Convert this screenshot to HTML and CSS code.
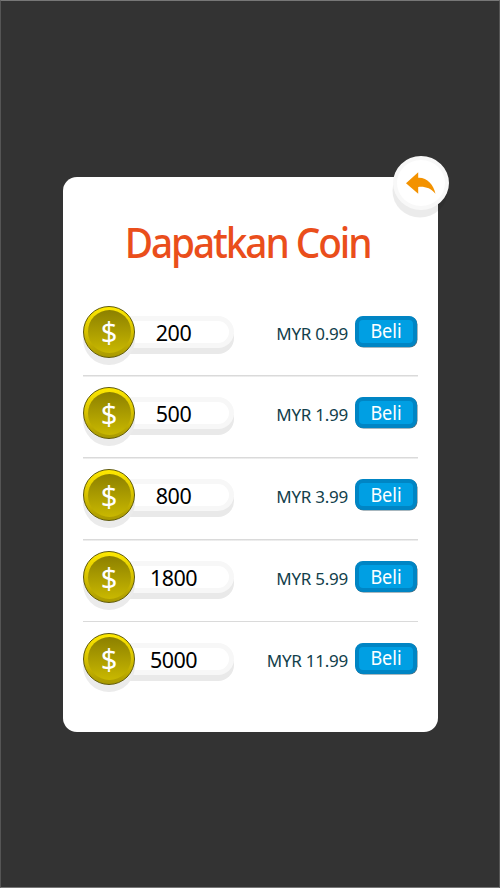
FILE: index.html
```html
<!DOCTYPE html>
<html lang="ms">
<head>
<meta charset="utf-8">
<title>Dapatkan Coin</title>
<link rel="stylesheet" href="styles.css">
</head>
<body>
<main class="card">
  <button class="back" aria-label="Kembali"><svg width="30" height="24" viewBox="0 0 30 24"><path d="M0 12.2 12.2 1.2v5.5C21 6.2 27.5 13.5 29.5 22.8 24.5 17.1 19.5 15.3 12.2 15.9v6.9z"/></svg></button>
  <h1 class="title">Dapatkan Coin</h1>
  <ul class="offers">
    <li class="offer"><span class="coin"><span>$</span></span><span class="amount">200</span><span class="price">MYR 0.99</span><button class="buy"><span>Beli</span></button></li>
    <li class="offer"><span class="coin"><span>$</span></span><span class="amount">500</span><span class="price">MYR 1.99</span><button class="buy"><span>Beli</span></button></li>
    <li class="offer"><span class="coin"><span>$</span></span><span class="amount">800</span><span class="price">MYR 3.99</span><button class="buy"><span>Beli</span></button></li>
    <li class="offer"><span class="coin"><span>$</span></span><span class="amount">1800</span><span class="price">MYR 5.99</span><button class="buy"><span>Beli</span></button></li>
    <li class="offer"><span class="coin"><span>$</span></span><span class="amount">5000</span><span class="price">MYR 11.99</span><button class="buy"><span>Beli</span></button></li>
  </ul>
</main>
</body>
</html>
```
FILE: styles.css
```css
* { box-sizing: border-box; }
body {
  margin: 0;
  height: 888px;
  padding: 176px 62px 0;
  background: #333;
  border: 1px solid #777;
  border-left-color: #555;
  border-right-color: #555;
  font-family: "Noto Sans", "Open Sans", sans-serif;
  overflow: hidden;
}
button { border: 0; padding: 0; font: inherit; }
.card {
  position: relative;
  width: 375px;
  height: 555px;
  padding: 0 20px;
  border-radius: 14px;
  background: #fff;
}
.back {
  position: absolute;
  left: 330px;
  top: -21px;
  width: 56px;
  height: 54px;
  display: flex;
  align-items: center;
  justify-content: center;
  border: 4px solid #f8f8f8;
  border-radius: 50%;
  background: #fff;
  box-shadow: -1px 8px 0 -.5px rgba(0, 0, 0, .08);
}
.back svg { fill: #f39200; }
.title {
  margin: 0 0 0 -6px;
  padding-top: 37px;
  height: 118px;
  color: #ea4e1b;
  font-size: 41px;
  font-weight: 500;
  line-height: 56px;
  letter-spacing: -2.2px;
  text-align: center;
  white-space: nowrap;
  transform: scaleX(.945);
}
.offers { margin: 0; padding: 0; list-style: none; }
.offer {
  display: flex;
  align-items: flex-start;
  height: 81.85px;
  padding-top: 20.5px;
  background: linear-gradient(#dadada, #dadada) 0 100% / 100% 1.5px no-repeat;
}
.offer:last-child { background: none; }
.coin {
  position: relative;
  z-index: 1;
  width: 52px;
  height: 52px;
  margin-top: -10px;
  display: flex;
  align-items: center;
  justify-content: center;
  border: 1px solid #5f5908;
  border-radius: 50%;
  background: linear-gradient(#ffe900, #d2bd00 55%, #a89900);
  box-shadow: 0 7px 0 #ebebeb;
  color: #fff;
  font-size: 29px;
}
.coin span {
  width: 43px;
  height: 43px;
  border-radius: 50%;
  background: linear-gradient(#8c8000, #c9b800);
  line-height: 43px;
  text-align: center;
}
.amount {
  width: 125px;
  height: 32px;
  margin-left: -26px;
  padding-left: 9px;
  border: 5px solid #f7f7f7;
  border-left: 0;
  border-radius: 0 16px 16px 0;
  background: #fff;
  box-shadow: 0 6px 0 #e9e9e9;
  color: #000;
  font-size: 21.5px;
  line-height: 24px;
  letter-spacing: -.5px;
  text-align: center;
}
.price {
  width: 114px;
  margin-top: 6px;
  color: #12404b;
  font-size: 17px;
  line-height: 24px;
  letter-spacing: -.25px;
  text-align: right;
  white-space: nowrap;
}
.buy {
  width: 62px;
  height: 31px;
  margin-left: 7px;
  border: 4px solid #0085c4;
  border-radius: 8px;
  background: #009fe3;
  box-shadow: .5px .5px 0 #53717f;
  color: #fff;
  font-size: 19px;
  line-height: 22px;
}
.buy span { display: block; transform: scaleX(.95); }
```
